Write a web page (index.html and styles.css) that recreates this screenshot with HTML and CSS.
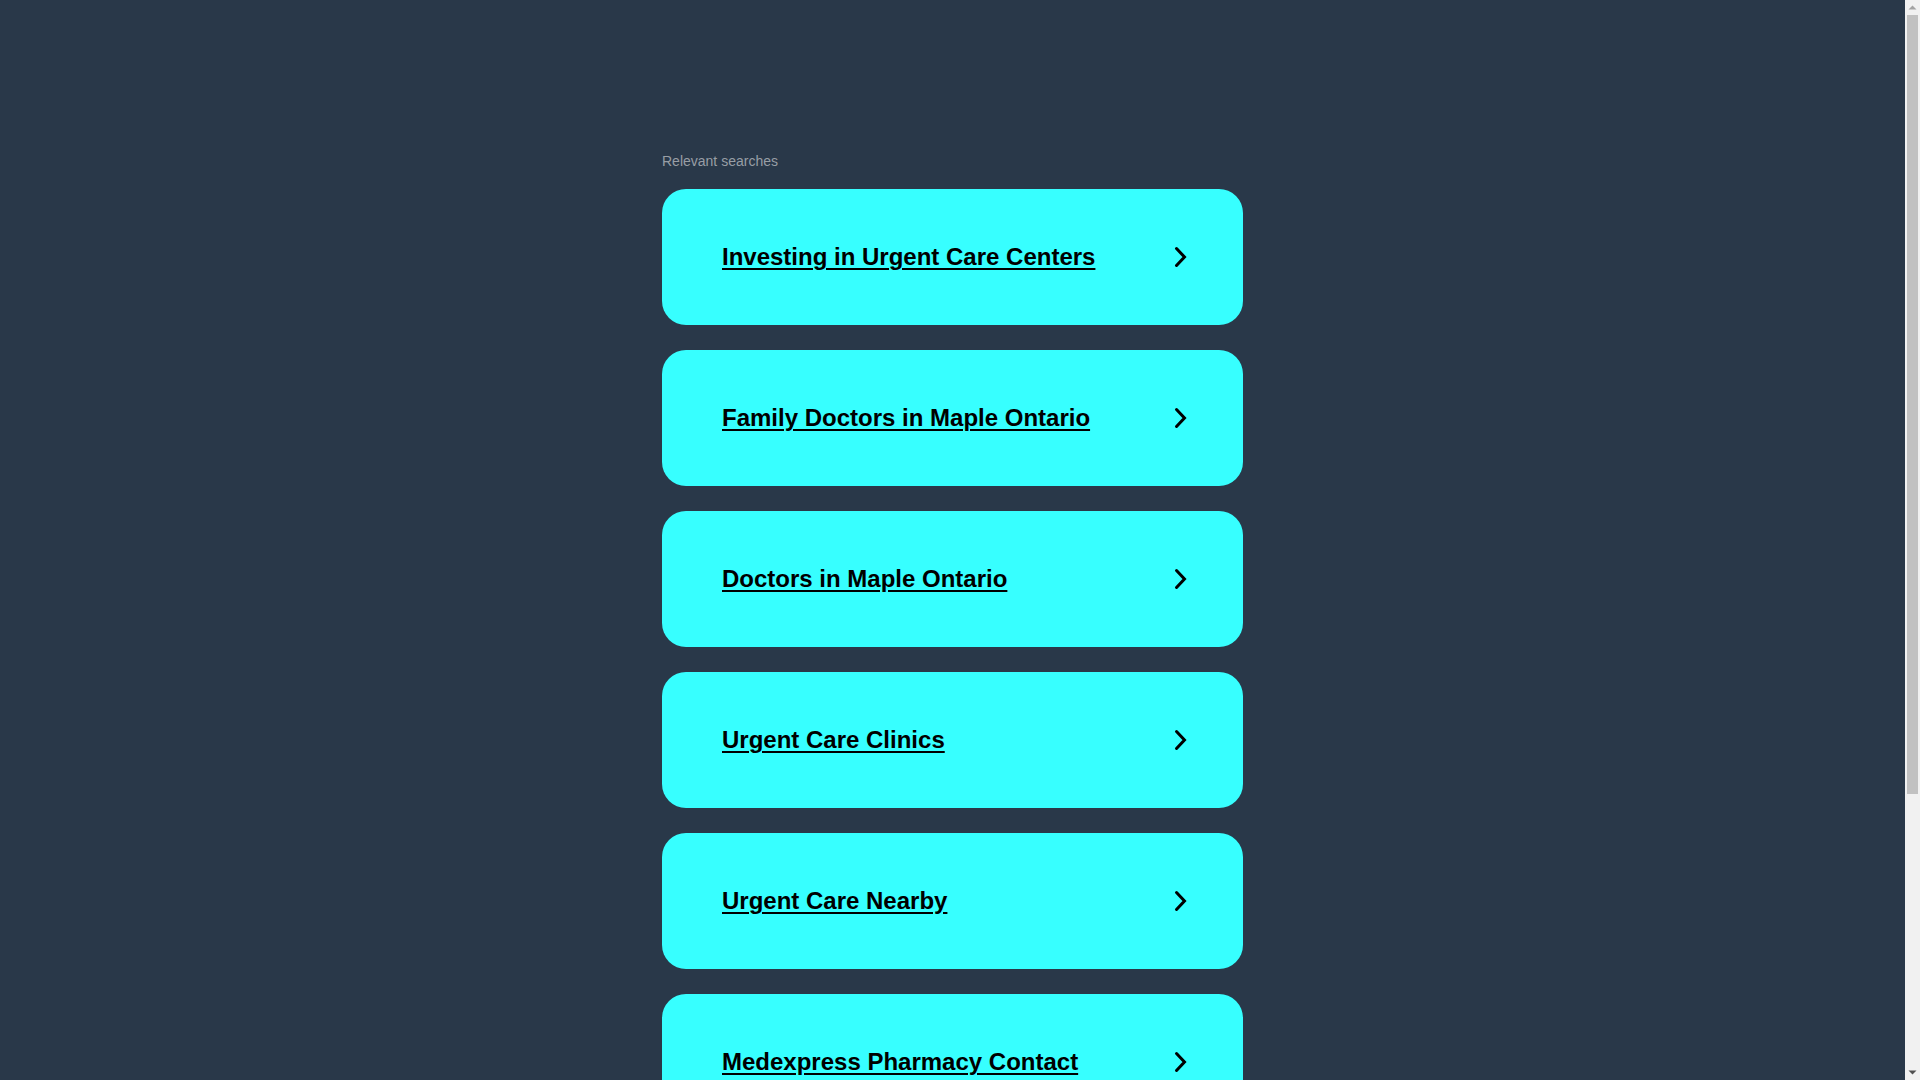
FILE: index.html
```html
<!DOCTYPE html>
<html lang="en">
<head>
<meta charset="utf-8">
<title>Relevant searches</title>
<link rel="stylesheet" href="styles.css">
</head>
<body>
<main class="page">
  <section class="searches">
    <p class="label">Relevant searches</p>
    <ul class="list">
      <li><a class="card" href="#"><span class="title">Investing in Urgent Care Centers</span><svg class="chev" viewBox="0 0 14 22" width="14" height="22"><polyline points="2.5,2.5 10.5,11 2.5,19.5"/></svg></a></li>
      <li><a class="card" href="#"><span class="title">Family Doctors in Maple Ontario</span><svg class="chev" viewBox="0 0 14 22" width="14" height="22"><polyline points="2.5,2.5 10.5,11 2.5,19.5"/></svg></a></li>
      <li><a class="card" href="#"><span class="title">Doctors in Maple Ontario</span><svg class="chev" viewBox="0 0 14 22" width="14" height="22"><polyline points="2.5,2.5 10.5,11 2.5,19.5"/></svg></a></li>
      <li><a class="card" href="#"><span class="title">Urgent Care Clinics</span><svg class="chev" viewBox="0 0 14 22" width="14" height="22"><polyline points="2.5,2.5 10.5,11 2.5,19.5"/></svg></a></li>
      <li><a class="card" href="#"><span class="title">Urgent Care Nearby</span><svg class="chev" viewBox="0 0 14 22" width="14" height="22"><polyline points="2.5,2.5 10.5,11 2.5,19.5"/></svg></a></li>
      <li><a class="card" href="#"><span class="title">Medexpress Pharmacy Contact</span><svg class="chev" viewBox="0 0 14 22" width="14" height="22"><polyline points="2.5,2.5 10.5,11 2.5,19.5"/></svg></a></li>
    </ul>
  </section>
</main>
<div class="scrollbar" aria-hidden="true">
  <svg class="sb-arrow" viewBox="0 0 15 15" width="15" height="15"><polygon class="up" points="3.5,9.5 7.5,5.5 11.5,9.5"/></svg>
  <div class="sb-track"><div class="sb-thumb"></div></div>
  <svg class="sb-arrow" viewBox="0 0 15 15" width="15" height="15"><polygon class="down" points="3.5,5.5 7.5,9.5 11.5,5.5"/></svg>
</div>
</body>
</html>
```
FILE: styles.css
```css
html, body {
  margin: 0;
  padding: 0;
  background: #293849;
}
body {
  font-family: "Liberation Sans", Arial, sans-serif;
  margin-right: 15px;
}
.page {
  display: flex;
  justify-content: center;
  padding: 153px 0 261px;
}
.searches {
  width: 581px;
}
.label {
  margin: 0 0 20px;
  font-size: 14px;
  line-height: 16px;
  color: #989ea5;
}
.list {
  list-style: none;
  margin: 0;
  padding: 0;
  display: flex;
  flex-direction: column;
  gap: 25px;
}
.card {
  box-sizing: border-box;
  height: 136px;
  display: flex;
  align-items: center;
  justify-content: space-between;
  padding: 0 55px 0 60px;
  background: #37ffff;
  border-radius: 24px;
  color: #000;
  text-decoration: none;
}
.title {
  font-size: 24px;
  font-weight: bold;
  text-decoration: underline;
  text-decoration-thickness: 2px;
  text-underline-offset: 3px;
}
.chev {
  display: block;
  flex: none;
}
.chev polyline {
  fill: none;
  stroke: #000;
  stroke-width: 3;
  stroke-linecap: round;
  stroke-linejoin: miter;
}
.scrollbar {
  position: fixed;
  top: 0;
  right: 0;
  width: 15px;
  height: 100vh;
  background: #f1f1f1;
  display: flex;
  flex-direction: column;
}
.sb-arrow {
  display: block;
  flex: none;
}
.sb-arrow .up {
  fill: #a3a3a3;
}
.sb-arrow .down {
  fill: #505050;
}
.sb-track {
  flex: 1;
  padding: 0 2px;
}
.sb-thumb {
  height: 779px;
  background: #c1c1c1;
}
```
